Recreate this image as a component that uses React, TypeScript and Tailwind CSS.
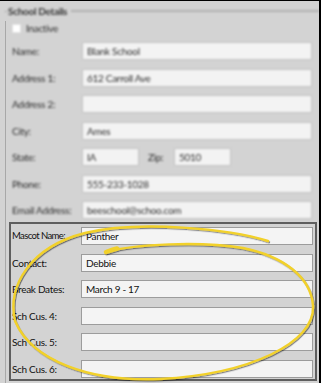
import React from "react";

const topRows: { label: string; value: string; kind?: "state" }[] = [
  { label: "Name:", value: "Blank School" },
  { label: "Address 1:", value: "612 Carroll Ave" },
  { label: "Address 2:", value: "" },
  { label: "City:", value: "Ames" },
  { label: "State:", value: "IA", kind: "state" },
  { label: "Phone:", value: "555-233-1028" },
  { label: "Email Address:", value: "beeschool@schoo.com" },
];

const bottomRows = [
  { label: "Mascot Name:", value: "Panther", tight: true },
  { label: "Contact:", value: "Debbie" },
  { label: "Break Dates:", value: "March 9 - 17" },
  { label: "Sch Cus. 4:", value: "" },
  { label: "Sch Cus. 5:", value: "" },
  { label: "Sch Cus. 6:", value: "" },
];

export default function App() {
  return (
    <div className="relative w-[321px] h-[383px] overflow-hidden bg-[#d3d3d3] border-t border-t-black border-r-2 border-r-black font-['Lato','Liberation_Sans',sans-serif] text-[10px] leading-none whitespace-nowrap tracking-[-0.3px]">
      <div className="flex flex-col">
        {/* header */}
        <div className="h-[20px] flex items-center blur-[0.8px]">
          <div className="w-[5px]" />
          <div className="w-[2px] border-t border-[#a0a0a0]" />
          <span className="pl-[1px] pr-[4px] font-bold text-[#333] text-[10px]">School Details</span>
          <div className="flex-1 border-t-2 border-[#b0b0b0]" />
        </div>
        <div className="ml-[5px] border-l border-[#a8a8a8] flex flex-col h-[362px]">
          <div className="pl-[6px] blur-[0.8px] text-[#2e2e2e]">
            <div className="h-[14px] flex items-center gap-[5px]">
              <div className="w-[9px] h-[9px] bg-white border border-[#e4e4e4]" />
              <span>Inactive</span>
            </div>
            <div className="mt-[7px] flex flex-col gap-[8.5px]">
              {topRows.map((r) => (
                <div key={r.label} className="h-[18px] flex items-center">
                  <div className="w-[70px]">{r.label}</div>
                  {r.kind === "state" ? (
                    <div className="flex items-center">
                      <div className="w-[57px] h-[18px] bg-[#f3f3f3] border border-[#c4c4c4] flex items-center pl-[4px]">{r.value}</div>
                      <div className="w-[35px] pl-[9px]">Zip:</div>
                      <div className="w-[57px] h-[18px] bg-[#f3f3f3] border border-[#c4c4c4] flex items-center pl-[4px]">5010</div>
                    </div>
                  ) : (
                    <div className="w-[230px] h-[18px] bg-[#f3f3f3] border border-[#c4c4c4] flex items-center pl-[4px]">{r.value}</div>
                  )}
                </div>
              ))}
            </div>
          </div>
          <div className="ml-[3px] mt-[3px] w-[308px] border-2 border-[#5e5e5e] pt-[3px] pl-[1px] pb-[1.5px] flex flex-col gap-[8.5px] text-[#111]">
            {bottomRows.map((r) => (
              <div key={r.label} className="h-[18px] flex items-center">
                <div className={r.tight ? "w-[69px] text-[9.5px] tracking-[-0.6px]" : "w-[69px]"}>{r.label}</div>
                <div className="w-[232px] h-[18px] bg-[#f4f4f4] border border-[#9c9c9c] flex items-center pl-[4px]">{r.value}</div>
              </div>
            ))}
          </div>
        </div>
      </div>
      <svg className="absolute inset-0 pointer-events-none" width="321" height="383" viewBox="0 0 321 383">
        <defs>
          <filter id="sh" x="-10%" y="-10%" width="120%" height="120%">
            <feDropShadow dx="1" dy="1.2" stdDeviation="0.7" floodColor="#000" floodOpacity="0.45" />
          </filter>
        </defs>
        <g filter="url(#sh)" fill="none" strokeLinecap="round">
          <path
            d="M106,251 C135,243 200,240 243,247 C282,255 311,275 313,305 C315,342 250,373 160,378 C90,381 32,360 15,320 C7,285 30,246 85,232 C140,219 230,228 268,240"
            stroke="#f2d12c"
            strokeWidth="2.4"
          />
          <path d="M106,251 C110,249.5 113,248.5 117,247.5" stroke="#f2d12c" strokeWidth="4.5" />
        </g>
      </svg>
    </div>
  );
}
